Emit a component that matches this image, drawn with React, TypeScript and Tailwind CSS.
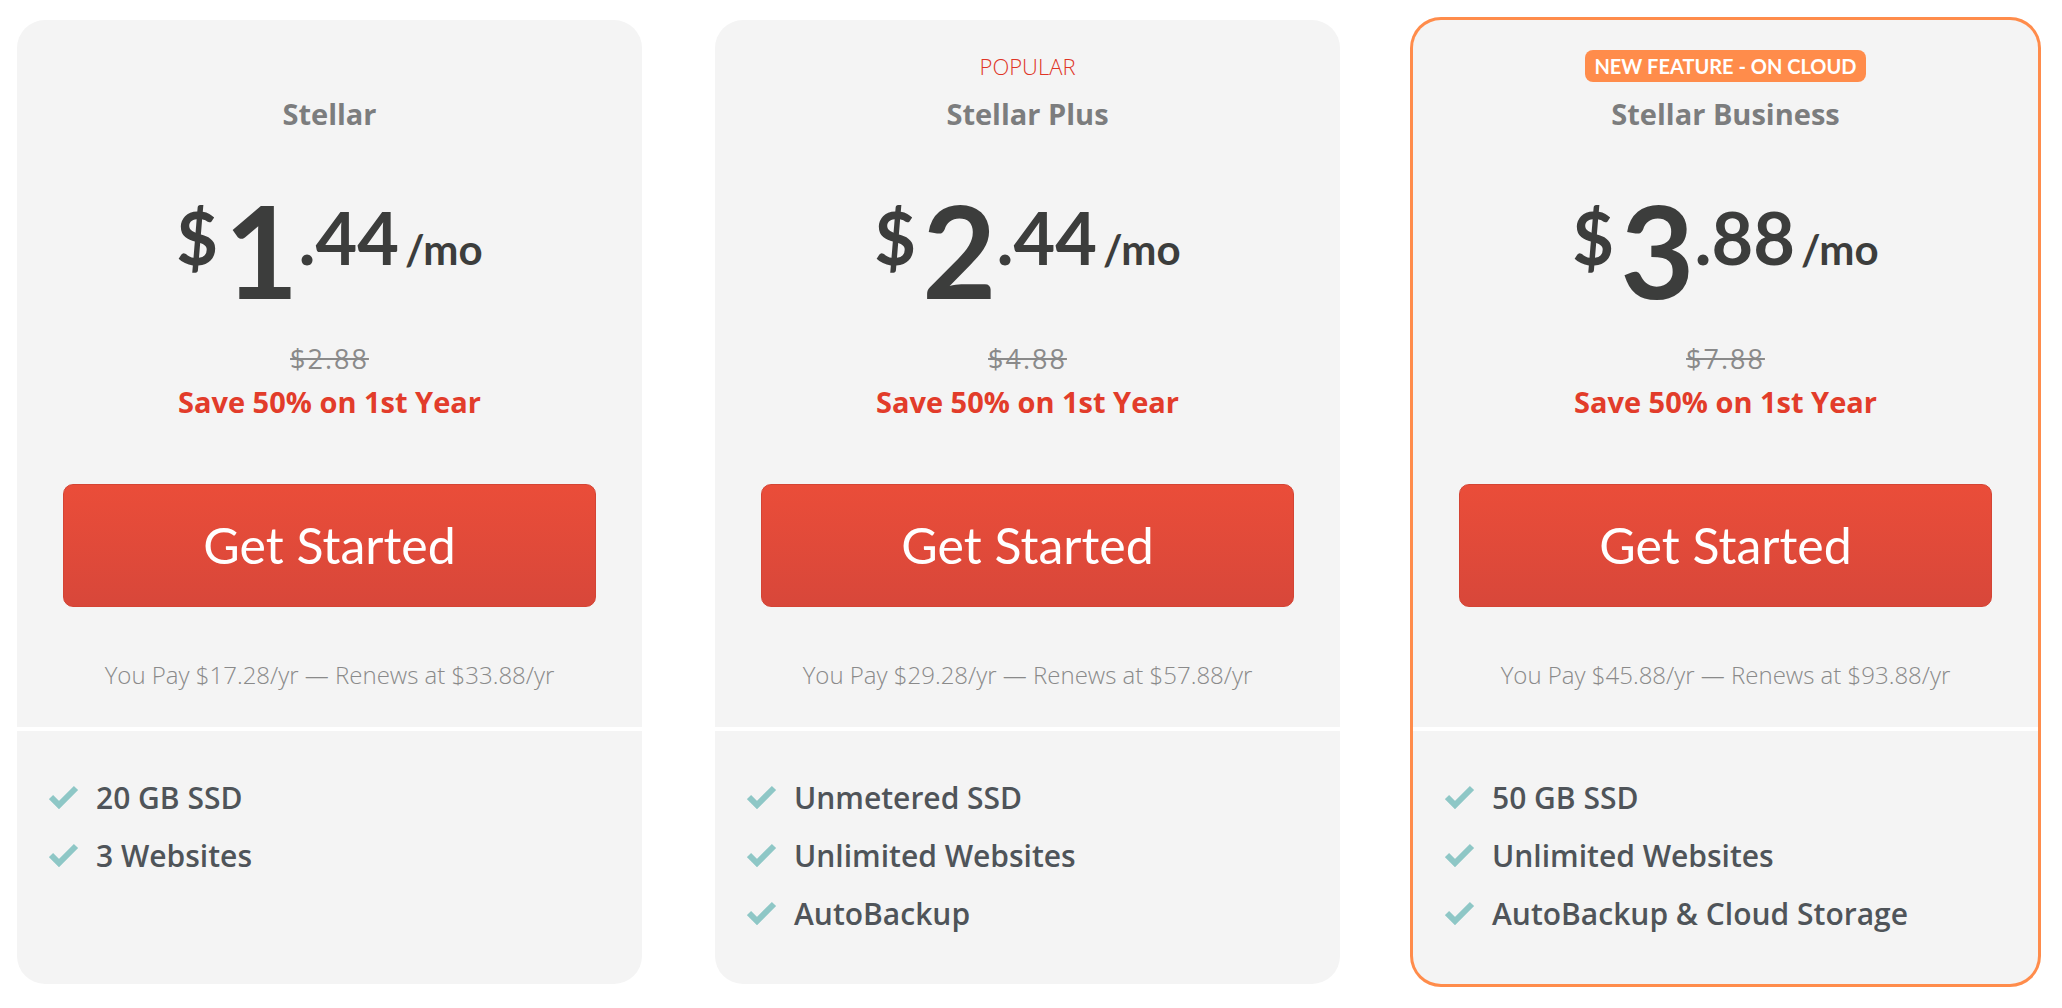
import React from 'react';

interface Plan {
  name: string;
  label?: 'popular' | 'badge';
  whole: string;
  cents: string;
  oldPrice: string;
  pay: string;
  renews: string;
  features: string[];
  featured?: boolean;
}

const plans: Plan[] = [
  {
    name: 'Stellar',
    whole: '1',
    cents: '.44',
    oldPrice: '$2.88',
    pay: '$17.28',
    renews: '$33.88',
    features: ['20 GB SSD', '3 Websites'],
  },
  {
    name: 'Stellar Plus',
    label: 'popular',
    whole: '2',
    cents: '.44',
    oldPrice: '$4.88',
    pay: '$29.28',
    renews: '$57.88',
    features: ['Unmetered SSD', 'Unlimited Websites', 'AutoBackup'],
  },
  {
    name: 'Stellar Business',
    label: 'badge',
    whole: '3',
    cents: '.88',
    oldPrice: '$7.88',
    pay: '$45.88',
    renews: '$93.88',
    features: ['50 GB SSD', 'Unlimited Websites', 'AutoBackup & Cloud Storage'],
    featured: true,
  },
];

const Check = () => (
  <svg width="30" height="24" viewBox="0 0 30 24" className="shrink-0">
    <polyline
      points="2,12 10,20 27,3"
      fill="none"
      stroke="#8ec7c6"
      strokeWidth="6"
      strokeLinejoin="miter"
    />
  </svg>
);

const PlanCard: React.FC<{ plan: Plan }> = ({ plan }) => {
  return (
    <div
      className={
        plan.featured
          ? 'w-[625px] h-[964px] rounded-[28px] bg-[#f4f4f4] overflow-hidden shadow-[0_0_0_3px_#ff8c4b]'
          : 'w-[625px] h-[964px] rounded-[28px] bg-[#f4f4f4] overflow-hidden'
      }
    >
      <div className="h-[711px] border-b-4 border-white flex flex-col items-center pt-[30px] px-[46px]">
        <div className="h-[32px] flex items-center justify-center">
          {plan.label === 'popular' && (
            <span className="font-['Open_Sans',_sans-serif] font-light text-[22px] text-[#df3426] leading-none">
              POPULAR
            </span>
          )}
          {plan.label === 'badge' && (
            <span className="h-[32px] px-[9px] rounded-[8px] bg-[#ff8c4b] text-white text-[20px] font-bold leading-[32px]">
              NEW FEATURE - ON CLOUD
            </span>
          )}
        </div>
        <div className="mt-[12px] h-[40px] flex items-center font-['Open_Sans',_sans-serif] text-[29px] font-bold text-[#7c7d7e]">
          {plan.name}
        </div>
        <div className="mt-[52px] h-[128px] flex items-start text-[#3c3d3c] font-bold">
          <span className="mt-[15px] text-[72px] leading-none">$</span>
          <span className="ml-[6px] text-[128px] leading-none">{plan.whole}</span>
          <span className="mt-[15px] text-[72px] leading-none">{plan.cents}</span>
          <span className="ml-[6px] mt-[42px] text-[42px] leading-none">/mo</span>
        </div>
        <div className="mt-[30px] h-[30px] flex items-center font-['Open_Sans',_sans-serif] text-[27px] tracking-[2px] text-[#8a8a8a] line-through">
          {plan.oldPrice}
        </div>
        <div className="mt-[10px] h-[36px] flex items-center font-['Open_Sans',_sans-serif] text-[29px] font-bold text-[#e23c2a]">
          Save 50% on 1st Year
        </div>
        <button className="mt-[64px] w-full h-[123px] rounded-[10px] border border-[#d44434] bg-linear-to-b from-[#ea4d39] to-[#d8473a] text-white text-[50px]">
          Get Started
        </button>
        <div className="mt-[53px] h-[30px] flex items-center font-['Open_Sans',_sans-serif] text-[24px] font-light text-[#8a8a8a]">
          You Pay {plan.pay}/yr — Renews at {plan.renews}/yr
        </div>
      </div>
      <ul className="pt-[37px] pl-[32px]">
        {plan.features.map((f) => (
          <li key={f} className="h-[58px] flex items-center gap-[17px]">
            <Check />
            <span className="font-['Open_Sans',_sans-serif] text-[30px] font-semibold text-[#4f5459]">{f}</span>
          </li>
        ))}
      </ul>
    </div>
  );
};

export default function App() {
  return (
    <div className="w-[2062px] h-[1008px] bg-white font-['Lato',_sans-serif] pt-[20px] pl-[17px] flex gap-[73px]">
      {plans.map((p) => (
        <PlanCard key={p.name} plan={p} />
      ))}
    </div>
  );
}
